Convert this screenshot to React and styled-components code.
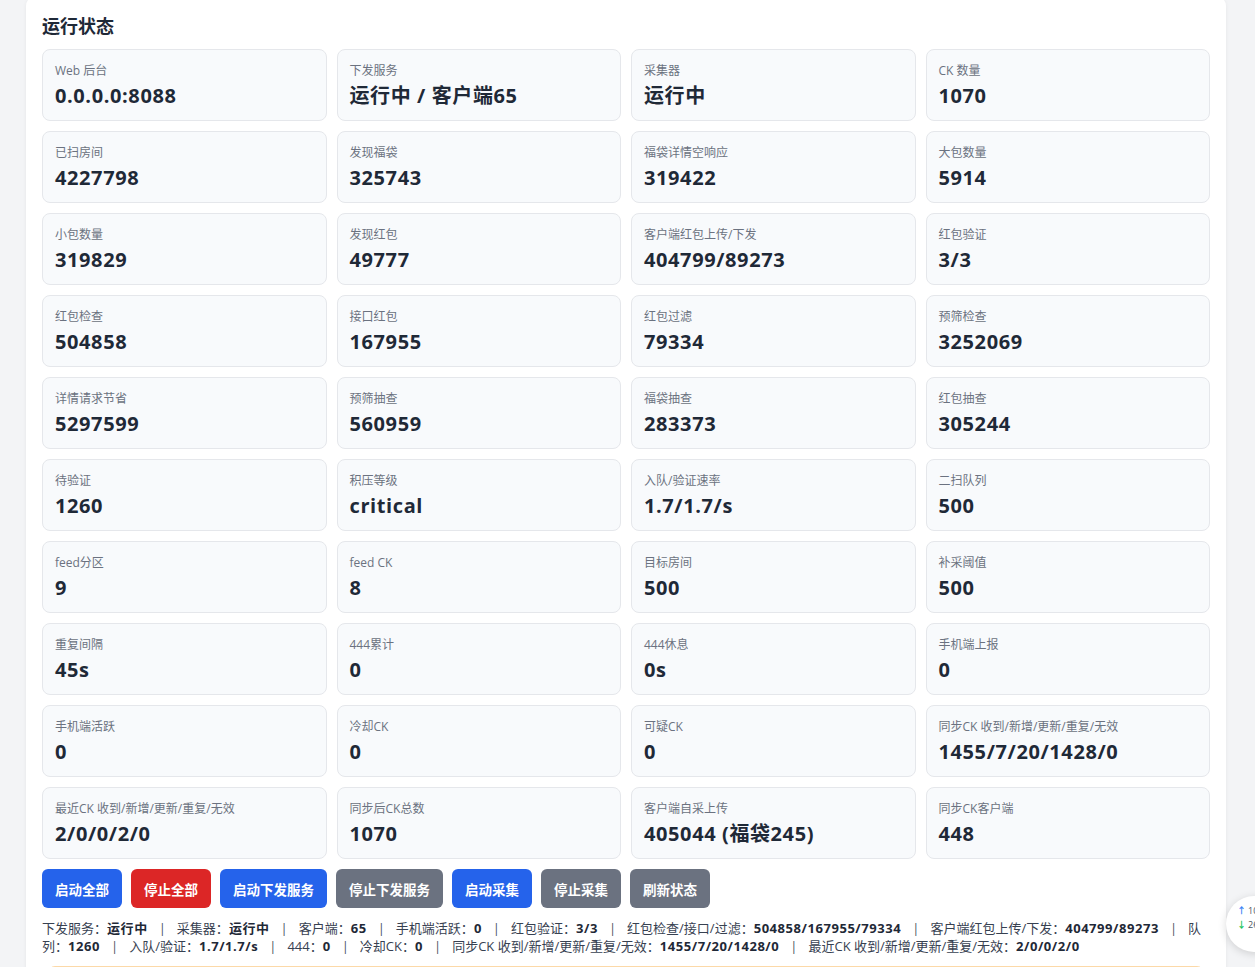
import React from "react";
import styled, { createGlobalStyle } from "styled-components";

const GlobalStyle = createGlobalStyle`
  html, body {
    margin: 0;
    padding: 0;
    background: #f3f4f6;
    font-family: "Open Sans", "Noto Sans CJK SC", sans-serif;
    color: #1f2937;
    overflow: hidden;
  }
`;

const Page = styled.div`
  width: 1255px;
  height: 967px;
  overflow: hidden;
  position: relative;
`;

const Panel = styled.section`
  margin: -4px 0 0 26px;
  width: 1200px;
  box-sizing: border-box;
  background: #fff;
  border-radius: 10px;
  box-shadow: 0 1px 4px rgba(15, 23, 42, 0.06);
  padding: 16px 16px 24px;
`;

const Title = styled.h2`
  margin: 0 0 9px;
  font-size: 18px;
  line-height: 28px;
  font-weight: 700;
  color: #1f2937;
`;

const Grid = styled.div`
  display: grid;
  grid-template-columns: repeat(4, 1fr);
  gap: 10px;
`;

const Stat = styled.div`
  height: 72px;
  box-sizing: border-box;
  padding: 13px 12px 0;
  background: #f8fafc;
  border: 1px solid #e5e7eb;
  border-radius: 8px;
`;

const Label = styled.div`
  font-size: 12px;
  line-height: 16px;
  color: #6b7280;
`;

const Value = styled.div`
  margin-top: 3px;
  font-size: 20px;
  line-height: 28px;
  font-weight: 700;
  letter-spacing: 0.6px;
  color: #1f2937;
  white-space: nowrap;
`;

const Actions = styled.div`
  display: flex;
  gap: 9px;
  margin-top: 10px;
`;

const tones = {
  blue: "#2563eb",
  red: "#dc2626",
  gray: "#6b7280",
};

const Button = styled.button`
  height: 39px;
  padding: 0 13px;
  border: none;
  border-radius: 6px;
  background: ${(p) => tones[p.$tone]};
  color: #fff;
  font-family: inherit;
  font-size: 13.5px;
  font-weight: 700;
  cursor: pointer;
`;

const Summary = styled.p`
  margin: 11px 0 0;
  font-size: 13px;
  line-height: 18px;
  color: #374151;
`;

const Strong = styled.b`
  font-weight: 700;
  letter-spacing: 0.55px;
  color: #1f2937;
`;

const Sep = styled.span`
  padding: 0 11px;
  color: #4b5563;
`;

const Notice = styled.div`
  margin: 11px 5px 0;
  height: 40px;
  border: 1px solid #fcd9a8;
  border-radius: 8px;
  background: #fffbeb;
`;

const SpeedBadge = styled.div`
  position: absolute;
  left: 1226px;
  top: 896px;
  width: 60px;
  height: 56px;
  box-sizing: border-box;
  padding: 8px 0 0 11px;
  background: #fff;
  border-radius: 28px;
  box-shadow: 0 2px 8px rgba(0, 0, 0, 0.15);
  font-size: 9px;
  line-height: 14px;
  color: #4b5563;
`;

const Arrow = styled.span`
  color: ${(p) => (p.$up ? "#3b82f6" : "#22c55e")};
  font-weight: 700;
  margin-right: 2px;
`;

const stats = [
  ["Web 后台", "0.0.0.0:8088"],
  ["下发服务", "运行中 / 客户端65"],
  ["采集器", "运行中"],
  ["CK 数量", "1070"],
  ["已扫房间", "4227798"],
  ["发现福袋", "325743"],
  ["福袋详情空响应", "319422"],
  ["大包数量", "5914"],
  ["小包数量", "319829"],
  ["发现红包", "49777"],
  ["客户端红包上传/下发", "404799/89273"],
  ["红包验证", "3/3"],
  ["红包检查", "504858"],
  ["接口红包", "167955"],
  ["红包过滤", "79334"],
  ["预筛检查", "3252069"],
  ["详情请求节省", "5297599"],
  ["预筛抽查", "560959"],
  ["福袋抽查", "283373"],
  ["红包抽查", "305244"],
  ["待验证", "1260"],
  ["积压等级", "critical"],
  ["入队/验证速率", "1.7/1.7/s"],
  ["二扫队列", "500"],
  ["feed分区", "9"],
  ["feed CK", "8"],
  ["目标房间", "500"],
  ["补采阈值", "500"],
  ["重复间隔", "45s"],
  ["444累计", "0"],
  ["444休息", "0s"],
  ["手机端上报", "0"],
  ["手机端活跃", "0"],
  ["冷却CK", "0"],
  ["可疑CK", "0"],
  ["同步CK 收到/新增/更新/重复/无效", "1455/7/20/1428/0"],
  ["最近CK 收到/新增/更新/重复/无效", "2/0/0/2/0"],
  ["同步后CK总数", "1070"],
  ["客户端自采上传", "405044 (福袋245)"],
  ["同步CK客户端", "448"],
];

const actions = [
  ["启动全部", "blue"],
  ["停止全部", "red"],
  ["启动下发服务", "blue"],
  ["停止下发服务", "gray"],
  ["启动采集", "blue"],
  ["停止采集", "gray"],
  ["刷新状态", "gray"],
];

const summary = [
  ["下发服务", "运行中"],
  ["采集器", "运行中"],
  ["客户端", "65"],
  ["手机端活跃", "0"],
  ["红包验证", "3/3"],
  ["红包检查/接口/过滤", "504858/167955/79334"],
  ["客户端红包上传/下发", "404799/89273"],
  ["队列", "1260"],
  ["入队/验证", "1.7/1.7/s"],
  ["444", "0"],
  ["冷却CK", "0"],
  ["同步CK 收到/新增/更新/重复/无效", "1455/7/20/1428/0"],
  ["最近CK 收到/新增/更新/重复/无效", "2/0/0/2/0"],
];

export default function App() {
  return (
    <Page>
      <GlobalStyle />
      <Panel>
        <Title>运行状态</Title>
        <Grid>
          {stats.map(([label, value]) => (
            <Stat key={label}>
              <Label>{label}</Label>
              <Value>{value}</Value>
            </Stat>
          ))}
        </Grid>
        <Actions>
          {actions.map(([text, tone]) => (
            <Button key={text} $tone={tone}>
              {text}
            </Button>
          ))}
        </Actions>
        <Summary>
          {summary.map(([k, v], i) => (
            <React.Fragment key={k}>
              {i > 0 && <Sep>|</Sep>}
              {k}：<Strong>{v}</Strong>
            </React.Fragment>
          ))}
        </Summary>
        <Notice />
      </Panel>
      <SpeedBadge>
        <div>
          <Arrow $up>↑</Arrow>10
        </div>
        <div>
          <Arrow>↓</Arrow>26
        </div>
      </SpeedBadge>
    </Page>
  );
}
